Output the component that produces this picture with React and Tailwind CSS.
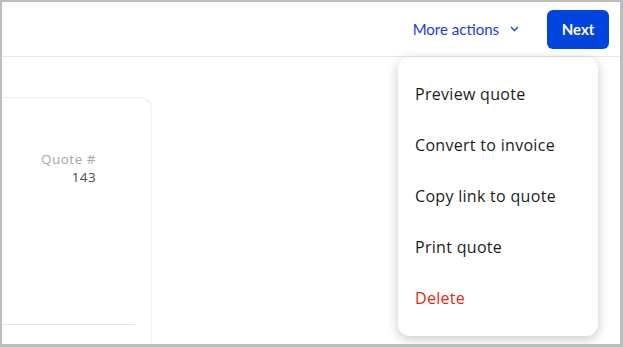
import React from 'react';

const menuItems = [
  { label: 'Preview quote' },
  { label: 'Convert to invoice' },
  { label: 'Copy link to quote' },
  { label: 'Print quote' },
  { label: 'Delete', danger: true },
];

const App = () => {
  return (
    <div className="relative w-[623px] h-[347px] overflow-hidden bg-white border-t-2 border-l-2 border-r-[3px] border-b-[3px] border-[#bdbdbd] font-['Lato',sans-serif]">
      {/* top bar */}
      <div className="h-[55px] flex items-center justify-end pr-[11px] border-b border-[#e6e6e6]">
        <button className="flex items-center gap-[11px] text-[15px] text-[#1a3be6] mr-[28px]">
          More actions
          <svg width="9" height="6" viewBox="0 0 9 6" fill="none">
            <path d="M1 1l3.5 3.5L8 1" stroke="#1a3be6" strokeWidth="1.3" />
          </svg>
        </button>
        <button className="w-[62px] h-[39px] rounded-[6px] bg-[#0043dd] text-white text-[15px] font-bold">
          Next
        </button>
      </div>

      {/* body */}
      <div className="pt-[40px]">
        <div className="w-[150px] h-[260px] rounded-tr-[12px] border-t border-r border-[#efeff1] flex flex-col">
          <div className="flex flex-col items-end pr-[55px] pt-[52px] leading-[18px] font-['Open_Sans',sans-serif]">
            <span className="text-[13.5px] tracking-[0.5px] text-[#a6a6ae]">Quote #</span>
            <span className="text-[13.5px] tracking-[0.4px] text-[#4b4b55]">143</span>
          </div>
          <div className="mt-auto mb-[32px] mr-[16px] border-t border-[#e4e4e4]"></div>
        </div>
      </div>

      {/* dropdown menu */}
      <div className="absolute left-[396px] top-[55px] w-[200px] pt-[11px] pb-[13px] rounded-[12px] bg-white shadow-[0_3px_12px_rgba(0,0,0,0.22)] font-['Open_Sans',sans-serif]">
        {menuItems.map((item) => (
          <div
            key={item.label}
            className={`h-[51px] flex items-center pl-[17px] text-[16px] tracking-[0.3px] ${item.danger ? 'text-[#e0290f]' : 'text-[#1c1c1c]'}`}
          >
            {item.label}
          </div>
        ))}
      </div>
    </div>
  );
};

export default App;
